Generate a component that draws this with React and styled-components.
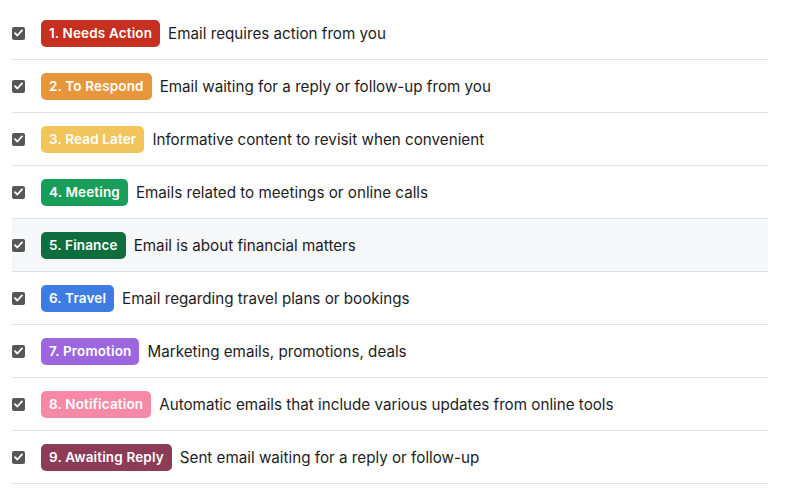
import React from 'react'
import styled, { createGlobalStyle } from 'styled-components'

const Global = createGlobalStyle`
  body {
    margin: 0;
    background: #ffffff;
    font-family: Inter, 'Noto Sans', sans-serif;
    color: #1d1d1f;
  }
`

const List = styled.ul`
  list-style: none;
  margin: 0 22px 0 12px;
  padding: 7px 0 0;
`

const Row = styled.li`
  display: flex;
  align-items: center;
  height: 52px;
  border-bottom: 1px solid #dfe3e9;
  background: ${p => (p.$active ? '#f6f7f9' : 'transparent')};
`

const Check = styled.span`
  display: inline-flex;
  align-items: center;
  justify-content: center;
  width: 13px;
  height: 13px;
  border-radius: 2px;
  background: #575757;
  margin-right: 16px;
  flex: none;
`

const Badge = styled.span`
  display: inline-flex;
  align-items: center;
  height: 27px;
  padding: 0 8px;
  border-radius: 5px;
  background: ${p => p.$color};
  color: #ffffff;
  font-size: 13.5px;
  font-weight: 600;
  letter-spacing: 0.15px;
  margin-right: 8px;
  white-space: nowrap;
`

const Desc = styled.span`
  font-size: 15.2px;
  color: #1d1d1f;
  white-space: nowrap;
`

const labels = [
  { name: '1. Needs Action', color: '#c53020', text: 'Email requires action from you' },
  { name: '2. To Respond', color: '#e8963b', text: 'Email waiting for a reply or follow-up from you' },
  { name: '3. Read Later', color: '#f1c55b', text: 'Informative content to revisit when convenient' },
  { name: '4. Meeting', color: '#189e5a', text: 'Emails related to meetings or online calls' },
  { name: '5. Finance', color: '#0f6e3d', text: 'Email is about financial matters', active: true },
  { name: '6. Travel', color: '#3d7de2', text: 'Email regarding travel plans or bookings' },
  { name: '7. Promotion', color: '#9c67de', text: 'Marketing emails, promotions, deals' },
  { name: '8. Notification', color: '#f689a8', text: 'Automatic emails that include various updates from online tools' },
  { name: '9. Awaiting Reply', color: '#8d3c58', text: 'Sent email waiting for a reply or follow-up' },
]

function Tick() {
  return (
    <svg width="9" height="8" viewBox="0 0 9 8">
      <path d="M1 4.2 L3.4 6.5 L8 1.4" fill="none" stroke="#fff" strokeWidth="1.8" strokeLinecap="round" strokeLinejoin="round" />
    </svg>
  )
}

export default function App() {
  return (
    <>
      <Global />
      <List>
        {labels.map(l => (
          <Row key={l.name} $active={l.active}>
            <Check><Tick /></Check>
            <Badge $color={l.color}>{l.name}</Badge>
            <Desc>{l.text}</Desc>
          </Row>
        ))}
      </List>
    </>
  )
}
